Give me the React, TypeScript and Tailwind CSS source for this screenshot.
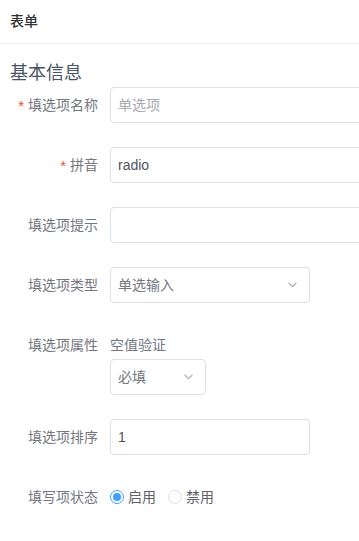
import { ReactNode } from 'react';

const font = { fontFamily: '"Liberation Sans", "Noto Sans CJK SC", sans-serif' };

function Chevron() {
  return (
    <svg width="9" height="6" viewBox="0 0 9 6" fill="none" className="shrink-0">
      <path d="M1 1.2 4.5 4.6 8 1.2" stroke="#a8abb2" strokeWidth="1.2" strokeLinecap="round" strokeLinejoin="round" />
    </svg>
  );
}

function Row({ label, required, children, top }: { label: string; required?: boolean; children: ReactNode; top?: boolean }) {
  return (
    <div className={`flex ${top ? 'items-start' : 'items-center'}`}>
      <div className="w-[110px] shrink-0 pr-3 h-9 flex items-center justify-end text-sm text-[#74787f]">
        {required && <span className="text-[#e2542f] mr-1 text-[15px] leading-none">*</span>}
        {label}
      </div>
      <div className="flex-1 min-w-0">{children}</div>
    </div>
  );
}

function TextInput({ value, placeholder, width }: { value?: string; placeholder?: string; width: string }) {
  return (
    <div className={`${width} h-9 border border-[#dcdfe6] rounded bg-white flex items-center pl-[7px] text-sm`}>
      {value ? <span className="text-[#50545b]">{value}</span> : <span className="text-[#a8abb2]">{placeholder}</span>}
    </div>
  );
}

function Select({ value, width }: { value: string; width: string }) {
  return (
    <div className={`${width} h-9 border border-[#dcdfe6] rounded bg-white flex items-center justify-between pl-[7px] pr-3 text-sm`}>
      <span className="text-[#74787f]">{value}</span>
      <Chevron />
    </div>
  );
}

function Radio({ label, checked }: { label: string; checked?: boolean }) {
  return (
    <div className="flex items-center">
      <span
        className={`w-[14px] h-[14px] rounded-full border flex items-center justify-center ${
          checked ? 'border-[#409eff]' : 'border-[#dcdfe6]'
        }`}
      >
        {checked && <span className="w-2 h-2 rounded-full bg-[#409eff]" />}
      </span>
      <span className="ml-1 text-sm text-[#606266]">{label}</span>
    </div>
  );
}

export default function App() {
  return (
    <div className="w-full h-[541px] bg-white overflow-hidden" style={font}>
      <header className="h-[44px] border-b border-[#ebeef5] pl-[10px] pt-[9px]">
        <span className="text-[14px] leading-[18px] font-medium text-[#303133]">表单</span>
      </header>

      <div className="h-[43px] pl-[10px] pt-[17px]">
        <h2 className="text-[18px] leading-[24px] text-[#4a5364]">基本信息</h2>
      </div>

      <div className="flex flex-col gap-6">
        <Row label="填选项名称" required>
          <TextInput placeholder="单选项" width="w-[320px]" />
        </Row>
        <Row label="拼音" required>
          <TextInput value="radio" width="w-[320px]" />
        </Row>
        <Row label="填选项提示">
          <TextInput width="w-[320px]" />
        </Row>
        <Row label="填选项类型">
          <Select value="单选输入" width="w-[200px]" />
        </Row>
        <Row label="填选项属性" top>
          <div className="h-[32px] pt-2 text-sm leading-5 text-[#74787f]">空值验证</div>
          <Select value="必填" width="w-[96px]" />
        </Row>
        <Row label="填选项排序">
          <TextInput value="1" width="w-[200px]" />
        </Row>
        <Row label="填写项状态">
          <div className="h-9 flex items-center gap-3">
            <Radio label="启用" checked />
            <Radio label="禁用" />
          </div>
        </Row>
      </div>
    </div>
  );
}
